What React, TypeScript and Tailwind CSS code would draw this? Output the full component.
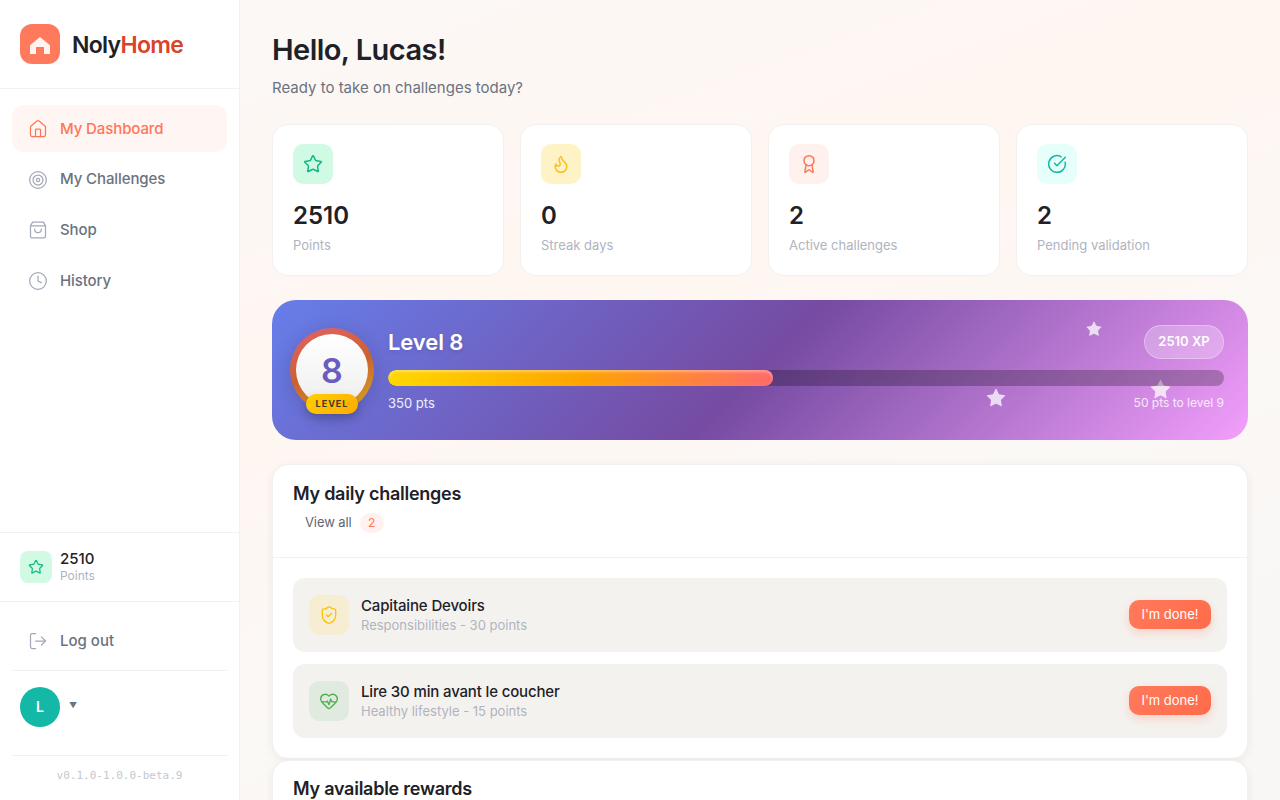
import React from 'react';
import { Award, CircleCheckBig, Clock, Flame, HeartPulse, House, LogOut, ShieldCheck, Star, Target } from 'lucide-react';

const IconBag: React.FC<{ className?: string }> = ({ className }) => (
  <svg viewBox="0 0 24 24" fill="none" stroke="currentColor" strokeWidth="1.5" strokeLinecap="round" strokeLinejoin="round" className={className}>
    <path d="M5.5 2.5h13L21 7v12.5a2 2 0 0 1-2 2H5a2 2 0 0 1-2-2V7z" />
    <path d="M3 7h18" />
    <path d="M16 11a4 4 0 0 1-8 0" />
  </svg>
);

const navItems = [
  { label: 'My Dashboard', icon: House, active: true },
  { label: 'My Challenges', icon: Target, active: false },
  { label: 'Shop', icon: IconBag, active: false },
  { label: 'History', icon: Clock, active: false },
];

const stats = [
  { value: '2510', label: 'Points', icon: Star, box: 'bg-[#d1fae5]', color: 'text-[#10b981]' },
  { value: '0', label: 'Streak days', icon: Flame, box: 'bg-[#fef3c7]', color: 'text-[#fbbf24]' },
  { value: '2', label: 'Active challenges', icon: Award, box: 'bg-[#fff1ed]', color: 'text-[#ff7657]' },
  { value: '2', label: 'Pending validation', icon: CircleCheckBig, box: 'bg-[#e6fffa]', color: 'text-[#14b8a6]' },
];

const challenges = [
  { title: 'Capitaine Devoirs', meta: 'Responsibilities - 30 points', icon: ShieldCheck, box: 'bg-[#f7edd3]', color: 'text-[#ffc107]' },
  { title: 'Lire 30 min avant le coucher', meta: 'Healthy lifestyle - 15 points', icon: HeartPulse, box: 'bg-[#e0eadf]', color: 'text-[#4caf50]' },
];

const stars = [
  { pos: 'left-[813px] top-[20px]', size: 'h-[18px] w-[18px]' },
  { pos: 'left-[713px] top-[87px]', size: 'h-[22px] w-[22px]' },
  { pos: 'left-[877px] top-[78px]', size: 'h-[23px] w-[23px]' },
];

const App: React.FC = () => {
  return (
    <div className="flex h-screen overflow-hidden bg-white font-['Inter',sans-serif] text-[#1e2126]">
      <aside className="flex w-[240px] shrink-0 flex-col border-r border-[#f1f1f1] bg-white">
        <div className="flex h-[89px] items-center gap-3 border-b border-[#f1f1f1] px-5">
          <div className="flex h-10 w-10 items-center justify-center rounded-xl bg-[#ff7a5c]">
            <svg viewBox="0 0 24 24" className="h-6 w-6 fill-white/90">
              <path d="M12 5 22 13.2V22h-6v-7H8v7H2v-8.8z" />
            </svg>
          </div>
          <span className="pt-[2px] text-[23px] font-semibold tracking-[-0.7px]">
            Noly<span className="text-[#d9432a]">Home</span>
          </span>
        </div>

        <nav className="flex flex-col gap-1 px-3 pt-4">
          {navItems.map((item) => (
            <a
              key={item.label}
              className={`flex h-[46.6px] items-center gap-3 rounded-xl px-4 pt-[1.5px] text-[15px] font-medium ${
                item.active ? 'bg-[#fff5f2] text-[#ff7657]' : 'text-[#6b7280]'
              }`}
            >
              <item.icon
                strokeWidth={1.5}
                className={`h-5 w-5 ${item.active ? 'text-[#ff7657]' : 'text-[#a3a9b8]'}`}
              />
              <span className="tracking-[-0.1px]">{item.label}</span>
            </a>
          ))}
        </nav>

        <div className="mt-auto border-t border-[#f1f1f1]">
          <div className="flex h-[69px] items-center gap-2 border-b border-[#f1f1f1] px-5">
            <div className="flex h-8 w-8 items-center justify-center rounded-lg bg-[#d1fae5]">
              <Star strokeWidth={1.8} className="h-4 w-4 text-[#10b981]" />
            </div>
            <div className="pb-[1px]">
              <p className="text-[15px] leading-[18px] font-medium">2510</p>
              <p className="text-xs leading-[15px] text-[#b0b4c0]">Points</p>
            </div>
          </div>
          <div className="px-3">
            <div className="flex h-[69px] items-center gap-3 border-b border-[#f1f1f1] px-4 pt-[10px]">
              <LogOut strokeWidth={1.5} className="h-5 w-5 text-[#a3a9b8]" />
              <span className="text-[15px] font-medium text-[#6b7280]">Log out</span>
            </div>
            <div className="flex h-[85px] items-start gap-[9px] border-b border-[#f1f1f1] px-2 pt-4">
              <div className="flex h-10 w-10 items-center justify-center rounded-full bg-[#14b8a6] text-sm font-semibold text-white">
                L
              </div>
              <span className="pt-[11px] text-[8px] leading-[14px] text-[#6b7280]">▼</span>
            </div>
            <p className="h-[44px] pt-[12px] text-center font-['DejaVu_Sans_Mono',monospace] text-[11px] leading-[15px] text-[#c4c7cf]">
              v0.1.0-1.0.0-beta.9
            </p>
          </div>
        </div>
      </aside>

      <main className="min-w-0 flex-1 overflow-hidden bg-[linear-gradient(160deg,#fbf8f5_0%,#fff6f1_35%,#fbf8f5_60%,#f8f7f5_100%)] px-8 pt-[31px]">
        <h1 className="text-[29px] leading-[38px] font-semibold tracking-[-0.55px]">Hello, Lucas!</h1>
        <p className="mt-[9px] text-[15px] leading-[20px] text-[#6b7280]">Ready to take on challenges today?</p>

        <div className="mt-[26px] grid grid-cols-4 gap-4">
          {stats.map((stat) => (
            <div key={stat.label} className="h-[152px] rounded-2xl border border-[#f3f1ef] bg-white p-5 pt-[19px]">
              <div className={`flex h-10 w-10 items-center justify-center rounded-[10px] ${stat.box}`}>
                <stat.icon strokeWidth={1.8} className={`h-5 w-5 ${stat.color}`} />
              </div>
              <p className="mt-4 text-2xl leading-8 font-semibold">{stat.value}</p>
              <p className="mt-[4px] text-[13px] leading-[18px] text-[#b0b4c0]">{stat.label}</p>
            </div>
          ))}
        </div>

        <section className="relative mt-6 flex h-[140px] items-center gap-[14px] overflow-hidden rounded-3xl bg-[linear-gradient(135deg,#667eea_0%,#764ba2_50%,#f29ffb_100%)] px-[18px]">
          {stars.map((star) => (
            <Star key={star.pos} className={`absolute ${star.pos} ${star.size} fill-white/75 text-transparent`} />
          ))}
          <div className="relative h-[84px] w-[84px] shrink-0 rounded-full bg-[linear-gradient(160deg,#e2626a,#cc6030_50%,#d4b01c)] p-[6px] shadow-[0_4px_20px_rgba(0,0,0,0.15)]">
            <div className="flex h-full w-full items-center justify-center rounded-full bg-[linear-gradient(180deg,#ffffff,#eeeeee)] text-[34px] font-semibold text-[#6a5cc0]">
              8
            </div>
            <span className="absolute bottom-[-2px] left-1/2 flex h-5 w-[52px] -translate-x-1/2 items-center justify-center rounded-[10px] bg-[linear-gradient(135deg,#ffd000,#ffaa00)] text-[9px] font-bold tracking-[1px] text-[#3f3a33] shadow-[0_4px_10px_rgba(0,0,0,0.2)]">
              LEVEL
            </span>
          </div>
          <div className="relative min-w-0 flex-1 pr-[6px] pb-[4px]">
            <div className="flex h-[34px] items-center justify-between">
              <h2 className="pt-[2px] text-[22px] font-semibold tracking-[-0.1px] text-white [text-shadow:0_2px_4px_rgba(0,0,0,0.1)]">Level 8</h2>
              <span className="flex h-[34px] w-[80px] items-center justify-center rounded-full border border-white/30 bg-white/25 text-[13px] font-semibold text-white">
                2510 XP
              </span>
            </div>
            <div className="mt-[11px] h-4 overflow-hidden rounded-full bg-black/25">
              <div className="h-full w-[46%] rounded-full bg-[linear-gradient(90deg,#ffd700,#ffa500_50%,#ff6b6b)] shadow-[inset_0_2px_3px_rgba(255,255,255,0.35)]" />
            </div>
            <div className="mt-[8px] flex justify-between text-[13px] leading-[18px] text-white/90">
              <span>350 pts</span>
              <span className="pt-[1px] text-xs text-white/80">50 pts to level 9</span>
            </div>
          </div>
        </section>

        <section className="mt-6 h-[295px] rounded-2xl border border-[#f3f1ef] bg-white shadow-[0_2px_10px_rgba(0,0,0,0.06)]">
          <div className="h-[93px] border-b border-[#f1f1f1] px-5 pt-[17px]">
            <h3 className="text-lg leading-6 font-semibold tracking-[-0.25px]">My daily challenges</h3>
            <div className="mt-[7px] flex items-center gap-2 pl-3">
              <span className="text-[13px] tracking-[-0.1px] text-[#5f6673]">View all</span>
              <span className="flex h-5 w-6 items-center justify-center rounded-full bg-[#fff1ed] text-xs text-[#ff7657]">2</span>
            </div>
          </div>
          <div className="flex flex-col gap-3 px-5 pt-5">
            {challenges.map((item) => (
              <div key={item.title} className="flex h-[74px] items-center gap-3 rounded-xl bg-[#f4f2ef] pr-4 pl-4">
                <div className={`flex h-10 w-10 items-center justify-center rounded-[10px] ${item.box}`}>
                  <item.icon strokeWidth={1.6} className={`h-5 w-5 ${item.color}`} />
                </div>
                <div className="min-w-0 flex-1">
                  <p className="text-[15px] leading-[20px] font-medium tracking-[-0.15px]">{item.title}</p>
                  <p className="text-[13px] leading-[18px] text-[#b0b4c0]">{item.meta}</p>
                </div>
                <button
                  type="button"
                  className="mb-[1px] h-[29px] w-[82px] rounded-[10px] bg-[linear-gradient(135deg,#ff7a5c,#ff6b4a)] text-[13px] text-white shadow-[0_4px_10px_rgba(255,118,87,0.25)]"
                >
                  I'm done!
                </button>
              </div>
            ))}
          </div>
        </section>

        <section className="mt-[1px] h-[120px] rounded-2xl border border-[#f3f1ef] bg-white px-5 pt-[16px] shadow-[0_2px_10px_rgba(0,0,0,0.06)]">
          <h3 className="text-lg leading-6 font-semibold tracking-[-0.25px]">My available rewards</h3>
        </section>
      </main>
    </div>
  );
};

export default App;
